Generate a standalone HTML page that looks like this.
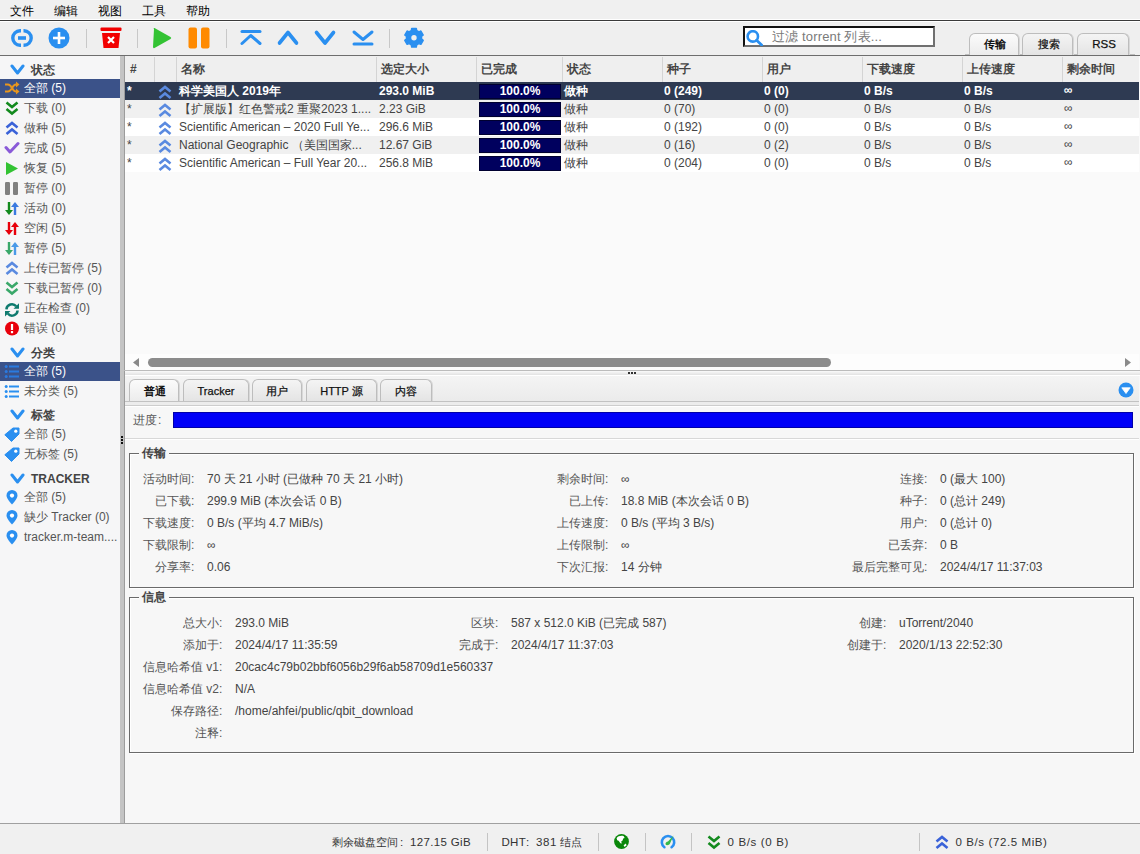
<!DOCTYPE html>
<html><head><meta charset="utf-8">
<style>
*{box-sizing:border-box;margin:0;padding:0}
html,body{width:1140px;height:854px;overflow:hidden;background:#f0f0f0;font-family:"Liberation Sans",sans-serif;font-size:12px;color:#333}
div,span,svg{position:absolute}
.t{white-space:nowrap;line-height:14px}
</style></head><body>

<div style="left:0;top:0;width:1140px;height:19px;background:#f0f0f0"></div>
<span class="t" style="left:10px;top:4px;font-size:12px;color:#000">文件</span>
<span class="t" style="left:54px;top:4px;font-size:12px;color:#000">编辑</span>
<span class="t" style="left:98px;top:4px;font-size:12px;color:#000">视图</span>
<span class="t" style="left:142px;top:4px;font-size:12px;color:#000">工具</span>
<span class="t" style="left:186px;top:4px;font-size:12px;color:#000">帮助</span>
<div style="left:0;top:19px;width:1140px;height:1px;background:#fff"></div>
<div style="left:0;top:20px;width:1140px;height:1px;background:#3a3a3a"></div>
<div style="left:0;top:21px;width:1140px;height:1px;background:#fff"></div>
<div style="left:0;top:22px;width:1140px;height:33px;background:#efefef"></div>
<div style="left:0;top:55px;width:1140px;height:1px;background:#6e6e6e"></div>
<div style="left:86px;top:29px;width:1px;height:19px;background:#c8c8c8"></div>
<div style="left:137px;top:29px;width:1px;height:19px;background:#c8c8c8"></div>
<div style="left:226px;top:29px;width:1px;height:19px;background:#c8c8c8"></div>
<div style="left:389px;top:29px;width:1px;height:19px;background:#c8c8c8"></div>
<svg style="left:11px;top:29px" width="22" height="18" viewBox="0 0 22 18"><path d="M10 1.8 H9 A7.2 7.2 0 0 0 9 16.2 H10" fill="none" stroke="#2a8ff0" stroke-width="3.4"/><path d="M12.5 1.8 H13 A7.2 7.2 0 0 1 13 16.2 H12.5" fill="none" stroke="#2a8ff0" stroke-width="3.4"/><rect x="7" y="7.2" width="8" height="3.6" fill="#2a8ff0"/></svg>
<svg style="left:48px;top:27px" width="22" height="22" viewBox="0 0 22 22"><circle cx="11" cy="11" r="10.5" fill="#2a8ff0"/><rect x="5" y="9.7" width="12" height="2.6" fill="#fff"/><rect x="9.7" y="5" width="2.6" height="12" fill="#fff"/></svg>
<svg style="left:100px;top:27px" width="22" height="22" viewBox="0 0 22 22"><rect x="0.5" y="0.5" width="21" height="3.5" rx="1" fill="#f20000"/><path d="M2 6 H20 L18.5 21 H3.5 Z" fill="#f20000"/><path d="M8 10 L14 16 M14 10 L8 16" stroke="#fff" stroke-width="2.2"/></svg>
<svg style="left:152px;top:27px" width="20" height="22" viewBox="0 0 20 22"><path d="M2 2 Q1 0.5 2.5 1 L18.5 10 Q20 11 18.5 12 L2.5 21 Q1 21.5 1 20 Z" fill="#33c333"/></svg>
<svg style="left:188px;top:27px" width="22" height="22" viewBox="0 0 22 22"><rect x="0.5" y="0.5" width="8.5" height="21" rx="2" fill="#ff8a00"/><rect x="13" y="0.5" width="8.5" height="21" rx="2" fill="#ff8a00"/></svg>
<svg style="left:239px;top:29px" width="24" height="18" viewBox="0 0 24 18"><path d="M3 2.5 H21" stroke="#2a8ff0" stroke-width="3" stroke-linecap="round"/><path d="M3 14.5 L11.7 6.5 L21 14.5" fill="none" stroke="#2a8ff0" stroke-width="3" stroke-linecap="round" stroke-linejoin="round"/></svg>
<svg style="left:276px;top:29px" width="24" height="18" viewBox="0 0 24 18"><path d="M3.5 14 L12 3.5 L20.5 14" fill="none" stroke="#2a8ff0" stroke-width="3.6" stroke-linecap="round" stroke-linejoin="round"/></svg>
<svg style="left:313px;top:29px" width="24" height="18" viewBox="0 0 24 18"><path d="M3.5 3.5 L12 14 L20.5 3.5" fill="none" stroke="#2a8ff0" stroke-width="3.6" stroke-linecap="round" stroke-linejoin="round"/></svg>
<svg style="left:351px;top:29px" width="24" height="18" viewBox="0 0 24 18"><path d="M3 15 H21" stroke="#2a8ff0" stroke-width="3" stroke-linecap="round"/><path d="M3 3 L12 10.5 L21 3" fill="none" stroke="#2a8ff0" stroke-width="3" stroke-linecap="round" stroke-linejoin="round"/></svg>
<svg style="left:403px;top:27px" width="22" height="22" viewBox="0 0 22 22"><path d="M7.20 4.12 L8.28 3.60 L8.68 1.39 L13.32 1.39 L13.72 3.60 L14.80 4.12 L15.78 4.79 L17.91 4.03 L20.23 8.05 L18.51 9.51 L18.60 10.70 L18.51 11.89 L20.23 13.35 L17.91 17.37 L15.78 16.61 L14.80 17.28 L13.72 17.80 L13.32 20.01 L8.68 20.01 L8.28 17.80 L7.20 17.28 L6.22 16.61 L4.09 17.37 L1.77 13.35 L3.49 11.89 L3.40 10.70 L3.49 9.51 L1.77 8.05 L4.09 4.03 L6.22 4.79 Z" fill="#2a8ff0" stroke="#2a8ff0" stroke-width="1.4" stroke-linejoin="round"/><circle cx="11" cy="10.7" r="2.7" fill="#efefef"/></svg>
<div style="left:743px;top:26px;width:192px;height:21px;background:#fff;border-top:2px solid #111;border-left:2px solid #111;border-right:2px solid #707070;border-bottom:2px solid #707070"></div>
<svg style="left:746px;top:30px" width="18" height="16" viewBox="0 0 18 16"><circle cx="6.8" cy="6.4" r="5.2" fill="none" stroke="#2a8ff0" stroke-width="2.6"/><path d="M10.6 10.2 L15.6 15" stroke="#2a8ff0" stroke-width="2.8" stroke-linecap="round"/></svg>
<span class="t" style="left:772px;top:29.5px;font-size:13px;letter-spacing:0.15px;color:#7a7a7a">过滤 torrent 列表...</span>
<div style="left:965px;top:54px;width:170px;height:1px;background:#bdbdbd"></div>
<div style="left:969px;top:33px;width:50px;height:22px;border:1px solid #bdbdbd;border-bottom:none;border-radius:6px 6px 0 0;background:linear-gradient(#fbfbfb,#ececec);box-shadow:1px 0 0 #d8d8d8"></div>
<div class="t" style="left:970px;top:37px;width:50px;text-align:center;font-size:11px;font-weight:bold;color:#111;">传输</div>
<div style="left:1022px;top:33px;width:51px;height:22px;border:1px solid #bdbdbd;border-bottom:none;border-radius:6px 6px 0 0;background:linear-gradient(#f4f4f4,#e4e4e4);box-shadow:1px 0 0 #d8d8d8"></div>
<div class="t" style="left:1023.5px;top:37px;width:51px;text-align:center;font-size:11px;font-weight:normal;color:#111;-webkit-text-stroke:0.25px #111;">搜索</div>
<div style="left:1077px;top:33px;width:52px;height:22px;border:1px solid #bdbdbd;border-bottom:none;border-radius:6px 6px 0 0;background:linear-gradient(#f4f4f4,#e4e4e4);box-shadow:1px 0 0 #d8d8d8"></div>
<div class="t" style="left:1078px;top:37px;width:52px;text-align:center;font-size:11.5px;font-weight:normal;color:#111;-webkit-text-stroke:0.25px #111;">RSS</div>
<div style="left:0;top:56px;width:120px;height:767px;background:#f6f6f7"></div>
<div style="left:120px;top:56px;width:4px;height:767px;background:#c4c4c4"></div>
<div style="left:124px;top:56px;width:1px;height:767px;background:#9c9c9c"></div>
<div style="left:121px;top:436px;width:2px;height:2px;background:#111"></div>
<div style="left:121px;top:439px;width:2px;height:2px;background:#111"></div>
<div style="left:121px;top:442px;width:2px;height:2px;background:#111"></div>
<svg style="left:10px;top:64px" width="15" height="11" viewBox="0 0 15 11"><path d="M2 2 L7.5 9 L13 2" fill="none" stroke="#2a8ff0" stroke-width="3" stroke-linecap="round" stroke-linejoin="round"/></svg>
<span class="t" style="left:31px;top:63px;font-size:12px;font-weight:bold;color:#444">状态</span>
<div style="left:0;top:79px;width:120px;height:19px;background:#3b5289"></div>
<svg style="left:4px;top:81px" width="16" height="14" viewBox="0 0 16 14"><path d="M1 3.5 H4 C8 3.5 8 10.5 12 10.5 H13.5 M1 10.5 H4 C8 10.5 8 3.5 12 3.5 H13.5" fill="none" stroke="#e8961e" stroke-width="2"/><path d="M12 0.5 L15.5 3.5 L12 6.5 Z M12 7.5 L15.5 10.5 L12 13.5Z" fill="#e8961e"/></svg>
<span class="t" style="left:24px;top:81px;font-size:12px;color:#fff">全部 (5)</span>
<svg style="left:4px;top:101px" width="16" height="15" viewBox="0 0 16 15"><path d="M2.5 1.5 L8 6 L13.5 1.5 M2.5 8 L8 12.5 L13.5 8" fill="none" stroke="#138a1e" stroke-width="2.6" stroke-linejoin="miter"/></svg>
<span class="t" style="left:24px;top:101px;font-size:12px;color:#555">下载 (0)</span>
<svg style="left:4px;top:121px" width="16" height="15" viewBox="0 0 16 15"><path d="M2.5 6.5 L8 2 L13.5 6.5 M2.5 13 L8 8.5 L13.5 13" fill="none" stroke="#3a62d8" stroke-width="2.6" stroke-linejoin="miter"/></svg>
<span class="t" style="left:24px;top:121px;font-size:12px;color:#555">做种 (5)</span>
<svg style="left:4px;top:141px" width="16" height="14" viewBox="0 0 16 14"><path d="M2 6.5 L6 11 L14 2.5" fill="none" stroke="#8a5ad8" stroke-width="3" stroke-linecap="round" stroke-linejoin="round"/></svg>
<span class="t" style="left:24px;top:141px;font-size:12px;color:#555">完成 (5)</span>
<svg style="left:4px;top:161px" width="16" height="15" viewBox="0 0 16 15"><path d="M2 1 L14 7.5 L2 14 Z" fill="#33c333"/></svg>
<span class="t" style="left:24px;top:161px;font-size:12px;color:#555">恢复 (5)</span>
<svg style="left:4px;top:181px" width="16" height="15" viewBox="0 0 16 15"><rect x="1" y="1" width="5" height="13" rx="1.2" fill="#808080"/><rect x="9" y="1" width="5" height="13" rx="1.2" fill="#808080"/></svg>
<span class="t" style="left:24px;top:181px;font-size:12px;color:#555">暂停 (0)</span>
<svg style="left:4px;top:201px" width="16" height="15" viewBox="0 0 16 15"><path d="M5 1 V11" stroke="#138a1e" stroke-width="2.4"/><path d="M1 9 L5 14 L9 9 Z" fill="#138a1e"/><path d="M11 4 V14" stroke="#3a7ae0" stroke-width="2.4"/><path d="M7 6 L11 1 L15 6 Z" fill="#3a7ae0"/></svg>
<span class="t" style="left:24px;top:201px;font-size:12px;color:#555">活动 (0)</span>
<svg style="left:4px;top:221px" width="16" height="15" viewBox="0 0 16 15"><path d="M5 1 V11" stroke="#e8000b" stroke-width="2.4"/><path d="M1 9 L5 14 L9 9 Z" fill="#e8000b"/><path d="M11 4 V14" stroke="#e8000b" stroke-width="2.4"/><path d="M7 6 L11 1 L15 6 Z" fill="#e8000b"/></svg>
<span class="t" style="left:24px;top:221px;font-size:12px;color:#555">空闲 (5)</span>
<svg style="left:4px;top:241px" width="16" height="15" viewBox="0 0 16 15"><path d="M5 1 V11" stroke="#3aa86a" stroke-width="2.4"/><path d="M1 9 L5 14 L9 9 Z" fill="#3aa86a"/><path d="M11 4 V14" stroke="#4a9ae8" stroke-width="2.4"/><path d="M7 6 L11 1 L15 6 Z" fill="#4a9ae8"/></svg>
<span class="t" style="left:24px;top:241px;font-size:12px;color:#555">暂停 (5)</span>
<svg style="left:4px;top:261px" width="16" height="15" viewBox="0 0 16 15"><path d="M2.5 6.5 L8 2 L13.5 6.5 M2.5 13 L8 8.5 L13.5 13" fill="none" stroke="#5a8ae0" stroke-width="2.6" stroke-linejoin="miter"/></svg>
<span class="t" style="left:24px;top:261px;font-size:12px;color:#555">上传已暂停 (5)</span>
<svg style="left:4px;top:281px" width="16" height="15" viewBox="0 0 16 15"><path d="M2.5 1.5 L8 6 L13.5 1.5 M2.5 8 L8 12.5 L13.5 8" fill="none" stroke="#3aa86a" stroke-width="2.6" stroke-linejoin="miter"/></svg>
<span class="t" style="left:24px;top:281px;font-size:12px;color:#555">下载已暂停 (0)</span>
<svg style="left:4px;top:301px" width="16" height="16" viewBox="0 0 16 16"><path d="M2.4 8.3 A5.5 5.5 0 0 1 12.2 5.3" fill="none" stroke="#0e7a6e" stroke-width="2.5"/><path d="M15 2.3 L15 7.8 L9.5 7.8 Z" fill="#0e7a6e"/><path d="M13.6 9.5 A5.5 5.5 0 0 1 3.8 12.5" fill="none" stroke="#0e7a6e" stroke-width="2.5"/><path d="M1 15.5 L1 10 L6.5 10 Z" fill="#0e7a6e"/></svg>
<span class="t" style="left:24px;top:301px;font-size:12px;color:#555">正在检查 (0)</span>
<svg style="left:4px;top:321px" width="16" height="15" viewBox="0 0 16 15"><circle cx="8" cy="7.5" r="7" fill="#e8000b"/><rect x="6.9" y="3" width="2.2" height="6" fill="#fff"/><rect x="6.9" y="10" width="2.2" height="2.2" fill="#fff"/></svg>
<span class="t" style="left:24px;top:321px;font-size:12px;color:#555">错误 (0)</span>
<svg style="left:10px;top:347px" width="15" height="11" viewBox="0 0 15 11"><path d="M2 2 L7.5 9 L13 2" fill="none" stroke="#2a8ff0" stroke-width="3" stroke-linecap="round" stroke-linejoin="round"/></svg>
<span class="t" style="left:31px;top:346px;font-size:12px;font-weight:bold;color:#444">分类</span>
<div style="left:0;top:362px;width:120px;height:19px;background:#3b5289"></div>
<svg style="left:4px;top:364px" width="16" height="15" viewBox="0 0 16 15"><circle cx="2.2" cy="2.5" r="1.5" fill="#2a7ae0"/><rect x="5" y="1.5" width="10" height="2" fill="#2a7ae0"/><circle cx="2.2" cy="7.5" r="1.5" fill="#2a7ae0"/><rect x="5" y="6.5" width="10" height="2" fill="#2a7ae0"/><circle cx="2.2" cy="12.5" r="1.5" fill="#2a7ae0"/><rect x="5" y="11.5" width="10" height="2" fill="#2a7ae0"/></svg>
<span class="t" style="left:24px;top:364px;font-size:12px;color:#fff">全部 (5)</span>
<svg style="left:4px;top:384px" width="16" height="15" viewBox="0 0 16 15"><circle cx="2.2" cy="2.5" r="1.5" fill="#2a8ff0"/><rect x="5" y="1.5" width="10" height="2" fill="#2a8ff0"/><circle cx="2.2" cy="7.5" r="1.5" fill="#2a8ff0"/><rect x="5" y="6.5" width="10" height="2" fill="#2a8ff0"/><circle cx="2.2" cy="12.5" r="1.5" fill="#2a8ff0"/><rect x="5" y="11.5" width="10" height="2" fill="#2a8ff0"/></svg>
<span class="t" style="left:24px;top:384px;font-size:12px;color:#555">未分类 (5)</span>
<svg style="left:10px;top:409px" width="15" height="11" viewBox="0 0 15 11"><path d="M2 2 L7.5 9 L13 2" fill="none" stroke="#2a8ff0" stroke-width="3" stroke-linecap="round" stroke-linejoin="round"/></svg>
<span class="t" style="left:31px;top:408px;font-size:12px;font-weight:bold;color:#444">标签</span>
<svg style="left:4px;top:427px" width="16" height="15" viewBox="0 0 16 15"><path d="M9 1 H15 V7 L7.5 14.5 L0.8 7.8 Z" fill="#2a8ff0" stroke="#2a8ff0" stroke-width="1" stroke-linejoin="round"/><circle cx="11.8" cy="4.2" r="1.6" fill="#fff"/></svg>
<span class="t" style="left:24px;top:427px;font-size:12px;color:#555">全部 (5)</span>
<svg style="left:4px;top:447px" width="16" height="15" viewBox="0 0 16 15"><path d="M9 1 H15 V7 L7.5 14.5 L0.8 7.8 Z" fill="#2a8ff0" stroke="#2a8ff0" stroke-width="1" stroke-linejoin="round"/><circle cx="11.8" cy="4.2" r="1.6" fill="#fff"/></svg>
<span class="t" style="left:24px;top:447px;font-size:12px;color:#555">无标签 (5)</span>
<svg style="left:10px;top:473px" width="15" height="11" viewBox="0 0 15 11"><path d="M2 2 L7.5 9 L13 2" fill="none" stroke="#2a8ff0" stroke-width="3" stroke-linecap="round" stroke-linejoin="round"/></svg>
<span class="t" style="left:31px;top:472px;font-size:12px;font-weight:bold;color:#444">TRACKER</span>
<svg style="left:4px;top:490px" width="16" height="15" viewBox="0 0 16 15"><path d="M8 14.5 C4 10 2.5 7.5 2.5 5.5 A5.5 5.5 0 0 1 13.5 5.5 C13.5 7.5 12 10 8 14.5 Z" fill="#2a8ff0"/><circle cx="8" cy="5.6" r="2.1" fill="#fff"/></svg>
<span class="t" style="left:24px;top:490px;font-size:12px;color:#555">全部 (5)</span>
<svg style="left:4px;top:510px" width="16" height="15" viewBox="0 0 16 15"><path d="M8 14.5 C4 10 2.5 7.5 2.5 5.5 A5.5 5.5 0 0 1 13.5 5.5 C13.5 7.5 12 10 8 14.5 Z" fill="#2a8ff0"/><circle cx="8" cy="5.6" r="2.1" fill="#fff"/></svg>
<span class="t" style="left:24px;top:510px;font-size:12px;color:#555">缺少 Tracker (0)</span>
<svg style="left:4px;top:530px" width="16" height="15" viewBox="0 0 16 15"><path d="M8 14.5 C4 10 2.5 7.5 2.5 5.5 A5.5 5.5 0 0 1 13.5 5.5 C13.5 7.5 12 10 8 14.5 Z" fill="#2a8ff0"/><circle cx="8" cy="5.6" r="2.1" fill="#fff"/></svg>
<span class="t" style="left:24px;top:530px;font-size:12px;color:#555">tracker.m-team....</span>
<div style="left:125px;top:56px;width:1015px;height:314px;background:#fafafa"></div>
<div style="left:125px;top:56px;width:1014px;height:26px;background:#efefef"></div>
<span class="t" style="left:130px;top:62px;font-size:12px;font-weight:bold;color:#444">#</span>
<div style="left:154px;top:57px;width:1px;height:25px;background:#d4d4d4"></div>
<div style="left:176px;top:57px;width:1px;height:25px;background:#d4d4d4"></div>
<span class="t" style="left:181px;top:62px;font-size:12px;font-weight:bold;color:#444">名称</span>
<div style="left:376px;top:57px;width:1px;height:25px;background:#d4d4d4"></div>
<span class="t" style="left:381px;top:62px;font-size:12px;font-weight:bold;color:#444">选定大小</span>
<div style="left:476px;top:57px;width:1px;height:25px;background:#d4d4d4"></div>
<span class="t" style="left:481px;top:62px;font-size:12px;font-weight:bold;color:#444">已完成</span>
<div style="left:562px;top:57px;width:1px;height:25px;background:#d4d4d4"></div>
<span class="t" style="left:567px;top:62px;font-size:12px;font-weight:bold;color:#444">状态</span>
<div style="left:662px;top:57px;width:1px;height:25px;background:#d4d4d4"></div>
<span class="t" style="left:667px;top:62px;font-size:12px;font-weight:bold;color:#444">种子</span>
<div style="left:762px;top:57px;width:1px;height:25px;background:#d4d4d4"></div>
<span class="t" style="left:767px;top:62px;font-size:12px;font-weight:bold;color:#444">用户</span>
<div style="left:862px;top:57px;width:1px;height:25px;background:#d4d4d4"></div>
<span class="t" style="left:867px;top:62px;font-size:12px;font-weight:bold;color:#444">下载速度</span>
<div style="left:962px;top:57px;width:1px;height:25px;background:#d4d4d4"></div>
<span class="t" style="left:967px;top:62px;font-size:12px;font-weight:bold;color:#444">上传速度</span>
<div style="left:1062px;top:57px;width:1px;height:25px;background:#d4d4d4"></div>
<span class="t" style="left:1067px;top:62px;font-size:12px;font-weight:bold;color:#444">剩余时间</span>
<div style="left:125px;top:82px;width:1014px;height:18px;background:#2e3a52"></div>
<span class="t" style="left:127px;top:84px;font-size:12px;color:#fff;font-weight:bold">*</span>
<svg style="left:157px;top:85px" width="16" height="15" viewBox="0 0 16 15"><path d="M2.5 6.5 L8 2 L13.5 6.5 M2.5 13 L8 8.5 L13.5 13" fill="none" stroke="#5a8ae0" stroke-width="2.6" stroke-linejoin="miter"/></svg>
<span class="t" style="left:179px;top:84px;font-size:12px;color:#fff;font-weight:bold">科学美国人 2019年</span>
<span class="t" style="left:379px;top:84px;font-size:12px;color:#fff;font-weight:bold">293.0 MiB</span>
<div style="left:479px;top:84px;width:82px;height:15px;background:#00005e;border:1px solid #000030"></div>
<div class="t" style="left:479px;top:84px;width:82px;text-align:center;font-size:12px;font-weight:bold;color:#fff">100.0%</div>
<span class="t" style="left:564px;top:84px;font-size:12px;color:#fff;font-weight:bold">做种</span>
<span class="t" style="left:664px;top:84px;font-size:12px;color:#fff;font-weight:bold">0 (249)</span>
<span class="t" style="left:764px;top:84px;font-size:12px;color:#fff;font-weight:bold">0 (0)</span>
<span class="t" style="left:864px;top:84px;font-size:12px;color:#fff;font-weight:bold">0 B/s</span>
<span class="t" style="left:964px;top:84px;font-size:12px;color:#fff;font-weight:bold">0 B/s</span>
<span class="t" style="left:1064px;top:82.5px;font-size:12px;color:#fff;font-weight:bold">∞</span>
<div style="left:125px;top:100px;width:1014px;height:18px;background:#f0f0f0"></div>
<span class="t" style="left:127px;top:102px;font-size:12px;color:#444;font-weight:normal">*</span>
<svg style="left:157px;top:103px" width="16" height="15" viewBox="0 0 16 15"><path d="M2.5 6.5 L8 2 L13.5 6.5 M2.5 13 L8 8.5 L13.5 13" fill="none" stroke="#5a8ae0" stroke-width="2.6" stroke-linejoin="miter"/></svg>
<span class="t" style="left:179px;top:102px;font-size:12px;color:#444;font-weight:normal">【扩展版】红色警戒2 重聚2023 1....</span>
<span class="t" style="left:379px;top:102px;font-size:12px;color:#444;font-weight:normal">2.23 GiB</span>
<div style="left:479px;top:102px;width:82px;height:15px;background:#00005e;border:1px solid #000030"></div>
<div class="t" style="left:479px;top:102px;width:82px;text-align:center;font-size:12px;font-weight:bold;color:#fff">100.0%</div>
<span class="t" style="left:564px;top:102px;font-size:12px;color:#444;font-weight:normal">做种</span>
<span class="t" style="left:664px;top:102px;font-size:12px;color:#444;font-weight:normal">0 (70)</span>
<span class="t" style="left:764px;top:102px;font-size:12px;color:#444;font-weight:normal">0 (0)</span>
<span class="t" style="left:864px;top:102px;font-size:12px;color:#444;font-weight:normal">0 B/s</span>
<span class="t" style="left:964px;top:102px;font-size:12px;color:#444;font-weight:normal">0 B/s</span>
<span class="t" style="left:1064px;top:100.5px;font-size:12px;color:#444;font-weight:normal">∞</span>
<div style="left:125px;top:118px;width:1014px;height:18px;background:#ffffff"></div>
<span class="t" style="left:127px;top:120px;font-size:12px;color:#444;font-weight:normal">*</span>
<svg style="left:157px;top:121px" width="16" height="15" viewBox="0 0 16 15"><path d="M2.5 6.5 L8 2 L13.5 6.5 M2.5 13 L8 8.5 L13.5 13" fill="none" stroke="#5a8ae0" stroke-width="2.6" stroke-linejoin="miter"/></svg>
<span class="t" style="left:179px;top:120px;font-size:12px;color:#444;font-weight:normal">Scientific American – 2020 Full Ye...</span>
<span class="t" style="left:379px;top:120px;font-size:12px;color:#444;font-weight:normal">296.6 MiB</span>
<div style="left:479px;top:120px;width:82px;height:15px;background:#00005e;border:1px solid #000030"></div>
<div class="t" style="left:479px;top:120px;width:82px;text-align:center;font-size:12px;font-weight:bold;color:#fff">100.0%</div>
<span class="t" style="left:564px;top:120px;font-size:12px;color:#444;font-weight:normal">做种</span>
<span class="t" style="left:664px;top:120px;font-size:12px;color:#444;font-weight:normal">0 (192)</span>
<span class="t" style="left:764px;top:120px;font-size:12px;color:#444;font-weight:normal">0 (0)</span>
<span class="t" style="left:864px;top:120px;font-size:12px;color:#444;font-weight:normal">0 B/s</span>
<span class="t" style="left:964px;top:120px;font-size:12px;color:#444;font-weight:normal">0 B/s</span>
<span class="t" style="left:1064px;top:118.5px;font-size:12px;color:#444;font-weight:normal">∞</span>
<div style="left:125px;top:136px;width:1014px;height:18px;background:#f0f0f0"></div>
<span class="t" style="left:127px;top:138px;font-size:12px;color:#444;font-weight:normal">*</span>
<svg style="left:157px;top:139px" width="16" height="15" viewBox="0 0 16 15"><path d="M2.5 6.5 L8 2 L13.5 6.5 M2.5 13 L8 8.5 L13.5 13" fill="none" stroke="#5a8ae0" stroke-width="2.6" stroke-linejoin="miter"/></svg>
<span class="t" style="left:179px;top:138px;font-size:12px;color:#444;font-weight:normal">National Geographic （美国国家...</span>
<span class="t" style="left:379px;top:138px;font-size:12px;color:#444;font-weight:normal">12.67 GiB</span>
<div style="left:479px;top:138px;width:82px;height:15px;background:#00005e;border:1px solid #000030"></div>
<div class="t" style="left:479px;top:138px;width:82px;text-align:center;font-size:12px;font-weight:bold;color:#fff">100.0%</div>
<span class="t" style="left:564px;top:138px;font-size:12px;color:#444;font-weight:normal">做种</span>
<span class="t" style="left:664px;top:138px;font-size:12px;color:#444;font-weight:normal">0 (16)</span>
<span class="t" style="left:764px;top:138px;font-size:12px;color:#444;font-weight:normal">0 (2)</span>
<span class="t" style="left:864px;top:138px;font-size:12px;color:#444;font-weight:normal">0 B/s</span>
<span class="t" style="left:964px;top:138px;font-size:12px;color:#444;font-weight:normal">0 B/s</span>
<span class="t" style="left:1064px;top:136.5px;font-size:12px;color:#444;font-weight:normal">∞</span>
<div style="left:125px;top:154px;width:1014px;height:18px;background:#ffffff"></div>
<span class="t" style="left:127px;top:156px;font-size:12px;color:#444;font-weight:normal">*</span>
<svg style="left:157px;top:157px" width="16" height="15" viewBox="0 0 16 15"><path d="M2.5 6.5 L8 2 L13.5 6.5 M2.5 13 L8 8.5 L13.5 13" fill="none" stroke="#5a8ae0" stroke-width="2.6" stroke-linejoin="miter"/></svg>
<span class="t" style="left:179px;top:156px;font-size:12px;color:#444;font-weight:normal">Scientific American – Full Year 20...</span>
<span class="t" style="left:379px;top:156px;font-size:12px;color:#444;font-weight:normal">256.8 MiB</span>
<div style="left:479px;top:156px;width:82px;height:15px;background:#00005e;border:1px solid #000030"></div>
<div class="t" style="left:479px;top:156px;width:82px;text-align:center;font-size:12px;font-weight:bold;color:#fff">100.0%</div>
<span class="t" style="left:564px;top:156px;font-size:12px;color:#444;font-weight:normal">做种</span>
<span class="t" style="left:664px;top:156px;font-size:12px;color:#444;font-weight:normal">0 (204)</span>
<span class="t" style="left:764px;top:156px;font-size:12px;color:#444;font-weight:normal">0 (0)</span>
<span class="t" style="left:864px;top:156px;font-size:12px;color:#444;font-weight:normal">0 B/s</span>
<span class="t" style="left:964px;top:156px;font-size:12px;color:#444;font-weight:normal">0 B/s</span>
<span class="t" style="left:1064px;top:154.5px;font-size:12px;color:#444;font-weight:normal">∞</span>
<div style="left:125px;top:354px;width:1014px;height:16px;background:#fdfdfd"></div>
<svg style="left:133px;top:358px" width="7" height="9" viewBox="0 0 7 9"><path d="M6 0 V9 L0 4.5 Z" fill="#8a8a8a"/></svg>
<div style="left:148px;top:358px;width:683px;height:9px;background:#8c8c8c;border-radius:4.5px"></div>
<svg style="left:1124px;top:358px" width="7" height="9" viewBox="0 0 7 9"><path d="M1 0 V9 L7 4.5 Z" fill="#8a8a8a"/></svg>
<div style="left:124px;top:370px;width:1016px;height:1px;background:#bcbcbc"></div>
<div style="left:125px;top:371px;width:1015px;height:4px;background:linear-gradient(#fafafa,#e2e2e2)"></div>
<div style="left:125px;top:375px;width:1015px;height:1px;background:#fff"></div>
<div style="left:628px;top:372px;width:2px;height:2px;background:#333"></div>
<div style="left:631px;top:372px;width:2px;height:2px;background:#333"></div>
<div style="left:634px;top:372px;width:2px;height:2px;background:#333"></div>
<div style="left:125px;top:376px;width:1015px;height:447px;background:#f7f7f7"></div>
<div style="left:125px;top:376px;width:1014px;height:30px;background:linear-gradient(#f4f4f4,#e9e9e9)"></div>
<div style="left:125px;top:401px;width:1014px;height:1px;background:#c2c2c2"></div>
<div style="left:125px;top:402px;width:1014px;height:3px;background:#ececec"></div>
<div style="left:125px;top:405px;width:1014px;height:1px;background:#cdcdcd"></div>
<div style="left:125px;top:406px;width:1014px;height:1px;background:#fff"></div>
<div style="left:129px;top:379px;width:50px;height:22px;border:1px solid #bdbdbd;border-bottom:none;border-radius:6px 6px 0 0;background:linear-gradient(#fbfbfb,#ececec);box-shadow:1px 0 0 #d8d8d8"></div>
<div class="t" style="left:130px;top:384px;width:50px;text-align:center;font-size:11px;font-weight:bold;color:#111;">普通</div>
<div style="left:183px;top:379px;width:66px;height:22px;border:1px solid #bdbdbd;border-bottom:none;border-radius:6px 6px 0 0;background:linear-gradient(#f4f4f4,#e4e4e4);box-shadow:1px 0 0 #d8d8d8"></div>
<div class="t" style="left:183px;top:384px;width:66px;text-align:center;font-size:11px;font-weight:normal;color:#111;-webkit-text-stroke:0.25px #111;">Tracker</div>
<div style="left:252px;top:379px;width:50px;height:22px;border:1px solid #bdbdbd;border-bottom:none;border-radius:6px 6px 0 0;background:linear-gradient(#f4f4f4,#e4e4e4);box-shadow:1px 0 0 #d8d8d8"></div>
<div class="t" style="left:252px;top:384px;width:50px;text-align:center;font-size:11px;font-weight:normal;color:#111;-webkit-text-stroke:0.25px #111;">用户</div>
<div style="left:306px;top:379px;width:71px;height:22px;border:1px solid #bdbdbd;border-bottom:none;border-radius:6px 6px 0 0;background:linear-gradient(#f4f4f4,#e4e4e4);box-shadow:1px 0 0 #d8d8d8"></div>
<div class="t" style="left:306px;top:384px;width:71px;text-align:center;font-size:11px;font-weight:normal;color:#111;-webkit-text-stroke:0.25px #111;">HTTP 源</div>
<div style="left:380px;top:379px;width:52px;height:22px;border:1px solid #bdbdbd;border-bottom:none;border-radius:6px 6px 0 0;background:linear-gradient(#f4f4f4,#e4e4e4);box-shadow:1px 0 0 #d8d8d8"></div>
<div class="t" style="left:380px;top:384px;width:52px;text-align:center;font-size:11px;font-weight:normal;color:#111;-webkit-text-stroke:0.25px #111;">内容</div>
<svg style="left:1118px;top:382px" width="16" height="16" viewBox="0 0 16 16"><circle cx="8" cy="8" r="7.5" fill="#2a8ff0"/><path d="M3.8 5.8 H12.2 L8 11.5 Z" fill="#fff" stroke="#fff" stroke-width="0.8" stroke-linejoin="round"/></svg>
<span class="t" style="left:133px;top:413px;font-size:12px;color:#555">进度</span>
<span class="t" style="left:158px;top:413px;font-size:12px;color:#555">:</span>
<div style="left:173px;top:412px;width:960px;height:16px;background:#0000f8;border:1px solid #0000a8"></div>
<div style="left:125px;top:438px;width:1014px;height:1px;background:#d8d8d8"></div>
<div style="left:125px;top:439px;width:1014px;height:1px;background:#fff"></div>
<div style="left:129px;top:453px;width:1005px;height:135px;border:1px solid #6a6a6a;box-shadow:inset 1px 1px 0 #fff,1px 1px 0 #fff"></div>
<span class="t" style="left:139px;top:446px;padding:0 3px;background:#f7f7f7;font-size:12px;font-weight:bold;color:#444">传输</span>
<div style="left:129px;top:597px;width:1005px;height:156px;border:1px solid #6a6a6a;box-shadow:inset 1px 1px 0 #fff,1px 1px 0 #fff"></div>
<span class="t" style="left:139px;top:590px;padding:0 3px;background:#f7f7f7;font-size:12px;font-weight:bold;color:#444">信息</span>
<div class="t" style="left:-9px;top:471.5px;width:200px;text-align:right;font-size:12px;color:#555">活动时间</div>
<span class="t" style="left:191px;top:471.5px;font-size:12px;color:#555">:</span>
<span class="t" style="left:207px;top:471.5px;font-size:12px;color:#444">70 天 21 小时 (已做种 70 天 21 小时)</span>
<div class="t" style="left:405px;top:471.5px;width:200px;text-align:right;font-size:12px;color:#555">剩余时间</div>
<span class="t" style="left:605px;top:471.5px;font-size:12px;color:#555">:</span>
<span class="t" style="left:621px;top:471.5px;font-size:12px;color:#444">∞</span>
<div class="t" style="left:724px;top:471.5px;width:200px;text-align:right;font-size:12px;color:#555">连接</div>
<span class="t" style="left:924px;top:471.5px;font-size:12px;color:#555">:</span>
<span class="t" style="left:940px;top:471.5px;font-size:12px;color:#444">0 (最大 100)</span>
<div class="t" style="left:-9px;top:493.5px;width:200px;text-align:right;font-size:12px;color:#555">已下载</div>
<span class="t" style="left:191px;top:493.5px;font-size:12px;color:#555">:</span>
<span class="t" style="left:207px;top:493.5px;font-size:12px;color:#444">299.9 MiB (本次会话 0 B)</span>
<div class="t" style="left:405px;top:493.5px;width:200px;text-align:right;font-size:12px;color:#555">已上传</div>
<span class="t" style="left:605px;top:493.5px;font-size:12px;color:#555">:</span>
<span class="t" style="left:621px;top:493.5px;font-size:12px;color:#444">18.8 MiB (本次会话 0 B)</span>
<div class="t" style="left:724px;top:493.5px;width:200px;text-align:right;font-size:12px;color:#555">种子</div>
<span class="t" style="left:924px;top:493.5px;font-size:12px;color:#555">:</span>
<span class="t" style="left:940px;top:493.5px;font-size:12px;color:#444">0 (总计 249)</span>
<div class="t" style="left:-9px;top:515.5px;width:200px;text-align:right;font-size:12px;color:#555">下载速度</div>
<span class="t" style="left:191px;top:515.5px;font-size:12px;color:#555">:</span>
<span class="t" style="left:207px;top:515.5px;font-size:12px;color:#444">0 B/s (平均 4.7 MiB/s)</span>
<div class="t" style="left:405px;top:515.5px;width:200px;text-align:right;font-size:12px;color:#555">上传速度</div>
<span class="t" style="left:605px;top:515.5px;font-size:12px;color:#555">:</span>
<span class="t" style="left:621px;top:515.5px;font-size:12px;color:#444">0 B/s (平均 3 B/s)</span>
<div class="t" style="left:724px;top:515.5px;width:200px;text-align:right;font-size:12px;color:#555">用户</div>
<span class="t" style="left:924px;top:515.5px;font-size:12px;color:#555">:</span>
<span class="t" style="left:940px;top:515.5px;font-size:12px;color:#444">0 (总计 0)</span>
<div class="t" style="left:-9px;top:537.5px;width:200px;text-align:right;font-size:12px;color:#555">下载限制</div>
<span class="t" style="left:191px;top:537.5px;font-size:12px;color:#555">:</span>
<span class="t" style="left:207px;top:537.5px;font-size:12px;color:#444">∞</span>
<div class="t" style="left:405px;top:537.5px;width:200px;text-align:right;font-size:12px;color:#555">上传限制</div>
<span class="t" style="left:605px;top:537.5px;font-size:12px;color:#555">:</span>
<span class="t" style="left:621px;top:537.5px;font-size:12px;color:#444">∞</span>
<div class="t" style="left:724px;top:537.5px;width:200px;text-align:right;font-size:12px;color:#555">已丢弃</div>
<span class="t" style="left:924px;top:537.5px;font-size:12px;color:#555">:</span>
<span class="t" style="left:940px;top:537.5px;font-size:12px;color:#444">0 B</span>
<div class="t" style="left:-9px;top:559.5px;width:200px;text-align:right;font-size:12px;color:#555">分享率</div>
<span class="t" style="left:191px;top:559.5px;font-size:12px;color:#555">:</span>
<span class="t" style="left:207px;top:559.5px;font-size:12px;color:#444">0.06</span>
<div class="t" style="left:405px;top:559.5px;width:200px;text-align:right;font-size:12px;color:#555">下次汇报</div>
<span class="t" style="left:605px;top:559.5px;font-size:12px;color:#555">:</span>
<span class="t" style="left:621px;top:559.5px;font-size:12px;color:#444">14 分钟</span>
<div class="t" style="left:724px;top:559.5px;width:200px;text-align:right;font-size:12px;color:#555">最后完整可见</div>
<span class="t" style="left:924px;top:559.5px;font-size:12px;color:#555">:</span>
<span class="t" style="left:940px;top:559.5px;font-size:12px;color:#444">2024/4/17 11:37:03</span>
<div class="t" style="left:19px;top:615.5px;width:200px;text-align:right;font-size:12px;color:#555">总大小</div>
<span class="t" style="left:219px;top:615.5px;font-size:12px;color:#555">:</span>
<span class="t" style="left:235px;top:615.5px;font-size:12px;color:#444">293.0 MiB</span>
<div class="t" style="left:19px;top:637.5px;width:200px;text-align:right;font-size:12px;color:#555">添加于</div>
<span class="t" style="left:219px;top:637.5px;font-size:12px;color:#555">:</span>
<span class="t" style="left:235px;top:637.5px;font-size:12px;color:#444">2024/4/17 11:35:59</span>
<div class="t" style="left:19px;top:659.5px;width:200px;text-align:right;font-size:12px;color:#555">信息哈希值 v1</div>
<span class="t" style="left:219px;top:659.5px;font-size:12px;color:#555">:</span>
<span class="t" style="left:235px;top:659.5px;font-size:12px;color:#444">20cac4c79b02bbf6056b29f6ab58709d1e560337</span>
<div class="t" style="left:19px;top:681.5px;width:200px;text-align:right;font-size:12px;color:#555">信息哈希值 v2</div>
<span class="t" style="left:219px;top:681.5px;font-size:12px;color:#555">:</span>
<span class="t" style="left:235px;top:681.5px;font-size:12px;color:#444">N/A</span>
<div class="t" style="left:19px;top:703.5px;width:200px;text-align:right;font-size:12px;color:#555">保存路径</div>
<span class="t" style="left:219px;top:703.5px;font-size:12px;color:#555">:</span>
<span class="t" style="left:235px;top:703.5px;font-size:12px;color:#444">/home/ahfei/public/qbit_download</span>
<div class="t" style="left:19px;top:725.5px;width:200px;text-align:right;font-size:12px;color:#555">注释</div>
<span class="t" style="left:219px;top:725.5px;font-size:12px;color:#555">:</span>
<span class="t" style="left:235px;top:725.5px;font-size:12px;color:#444"></span>
<div class="t" style="left:295px;top:615.5px;width:200px;text-align:right;font-size:12px;color:#555">区块</div>
<span class="t" style="left:495px;top:615.5px;font-size:12px;color:#555">:</span>
<span class="t" style="left:511px;top:615.5px;font-size:12px;color:#444">587 x 512.0 KiB (已完成 587)</span>
<div class="t" style="left:295px;top:637.5px;width:200px;text-align:right;font-size:12px;color:#555">完成于</div>
<span class="t" style="left:495px;top:637.5px;font-size:12px;color:#555">:</span>
<span class="t" style="left:511px;top:637.5px;font-size:12px;color:#444">2024/4/17 11:37:03</span>
<div class="t" style="left:683px;top:615.5px;width:200px;text-align:right;font-size:12px;color:#555">创建</div>
<span class="t" style="left:883px;top:615.5px;font-size:12px;color:#555">:</span>
<span class="t" style="left:899px;top:615.5px;font-size:12px;color:#444">uTorrent/2040</span>
<div class="t" style="left:683px;top:637.5px;width:200px;text-align:right;font-size:12px;color:#555">创建于</div>
<span class="t" style="left:883px;top:637.5px;font-size:12px;color:#555">:</span>
<span class="t" style="left:899px;top:637.5px;font-size:12px;color:#444">2020/1/13 22:52:30</span>
<div style="left:0;top:823px;width:1140px;height:1px;background:#a0a0a0"></div>
<div style="left:0;top:824px;width:1140px;height:30px;background:#f0f0f0"></div>
<span class="t" style="left:332px;top:835px;font-size:11px;color:#333;letter-spacing:0px">剩余磁盘空间</span>
<span class="t" style="left:400px;top:835px;font-size:11.5px;color:#333;letter-spacing:0px">:</span>
<span class="t" style="left:410px;top:835px;font-size:11.5px;color:#333;letter-spacing:0.35px">127.15 GiB</span>
<div style="left:487px;top:833px;width:1px;height:18px;background:#c4c4c4"></div>
<span class="t" style="left:501.5px;top:835px;font-size:11.5px;color:#333;letter-spacing:0.3px">DHT</span>
<span class="t" style="left:526px;top:835px;font-size:11.5px;color:#333;letter-spacing:0px">:</span>
<span class="t" style="left:536px;top:835px;font-size:11.5px;color:#333;letter-spacing:0.6px">381</span>
<span class="t" style="left:560px;top:835px;font-size:11px;color:#333;letter-spacing:0px">结点</span>
<div style="left:598px;top:833px;width:1px;height:18px;background:#c4c4c4"></div>
<svg style="left:614px;top:834px" width="16" height="16" viewBox="0 0 16 16"><circle cx="7.5" cy="7.5" r="7.4" fill="#0a870a"/><path d="M2.6 4.2 C4 2 7.5 1.2 9.8 2.3 L10.6 4 L9.2 4.6 L8.6 6.6 L7.2 7.6 L7.8 9.6 L6.4 9.2 L4.6 6.8 L3.2 6.2 Z" fill="#fff"/><path d="M9.6 11.2 L11.8 9.6 L12.6 11.2 L10.6 13 Z" fill="#fff"/></svg>
<div style="left:645px;top:833px;width:1px;height:18px;background:#c4c4c4"></div>
<svg style="left:660px;top:834px" width="16" height="16" viewBox="0 0 16 16"><path d="M4.4 13.2 A6.2 6.2 0 1 1 11.6 13.2" fill="none" stroke="#2a8ff0" stroke-width="2.6" stroke-linecap="round"/><path d="M5.6 10.6 C5.2 9 6.4 7.6 8 7.6 L13.6 1.6 L10 9.6 C9.4 11 6.8 12 5.6 10.6 Z" fill="#35b84a"/></svg>
<div style="left:691px;top:833px;width:1px;height:18px;background:#c4c4c4"></div>
<svg style="left:706px;top:835px" width="16" height="15" viewBox="0 0 16 15"><path d="M2.5 1.5 L8 6 L13.5 1.5 M2.5 8 L8 12.5 L13.5 8" fill="none" stroke="#138a1e" stroke-width="2.6" stroke-linejoin="miter"/></svg>
<span class="t" style="left:727.5px;top:835px;font-size:11.5px;color:#333;letter-spacing:0.65px">0 B/s (0 B)</span>
<div style="left:919px;top:833px;width:1px;height:18px;background:#c4c4c4"></div>
<svg style="left:934px;top:835px" width="16" height="15" viewBox="0 0 16 15"><path d="M2.5 6.5 L8 2 L13.5 6.5 M2.5 13 L8 8.5 L13.5 13" fill="none" stroke="#3a62d8" stroke-width="2.6" stroke-linejoin="miter"/></svg>
<span class="t" style="left:955.5px;top:835px;font-size:11.5px;color:#333;letter-spacing:0.6px">0 B/s (72.5 MiB)</span>
</body></html>
